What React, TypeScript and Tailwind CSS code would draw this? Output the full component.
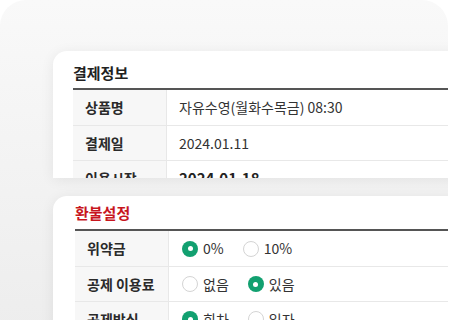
type Row = { label: string; value?: string; options?: { text: string; checked: boolean }[] };

const payRows: Row[] = [
  { label: "상품명", value: "자유수영(월화수목금) 08:30" },
  { label: "결제일", value: "2024.01.11" },
  { label: "이용시작", value: "2024.01.18" },
];

const refundRows: Row[] = [
  { label: "위약금", options: [{ text: "0%", checked: true }, { text: "10%", checked: false }] },
  { label: "공제 이용료", options: [{ text: "없음", checked: false }, { text: "있음", checked: true }] },
  { label: "공제방식", options: [{ text: "회차", checked: true }, { text: "일자", checked: false }] },
];

const Radio = ({ checked }: { checked: boolean }) =>
  checked ? (
    <span className="flex h-[16px] w-[16px] items-center justify-center rounded-full bg-[#12a070]">
      <span className="h-[5px] w-[5px] rounded-full bg-white" />
    </span>
  ) : (
    <span className="h-[16px] w-[16px] rounded-full border-[1.5px] border-[#d4d4d4] bg-white" />
  );

const Table = ({ rows }: { rows: Row[] }) => (
  <div className="border-t-2 border-[#555]">
    {rows.map((r, i) => (
      <div key={r.label} className={`flex h-[35px] ${i > 0 ? "border-t border-[#e8e8e8]" : "h-[34px]"}`}>
        <div className="flex w-[94px] shrink-0 items-center border-r border-[#e8e8e8] bg-[#f7f7f7] pl-[12px] text-[14px] font-semibold text-[#2a2a2a]">
          {r.label}
        </div>
        <div className="flex flex-1 items-center pl-[12px] text-[14px] text-[#333]">
          {r.value && (
            <span className={i === 2 && !r.options ? "text-[15px] font-semibold text-[#222]" : ""}>{r.value}</span>
          )}
          {r.options && (
            <div className="flex items-center gap-[19px] pl-[1px]">
              {r.options.map((o) => (
                <div key={o.text} className="flex items-center gap-[5px]">
                  <Radio checked={o.checked} />
                  <span>{o.text}</span>
                </div>
              ))}
            </div>
          )}
        </div>
      </div>
    ))}
  </div>
);

export default function App() {
  return (
    <div
      className="h-[320px] w-[450px] overflow-hidden bg-white"
      style={{ fontFamily: '"Noto Sans CJK KR", "Noto Sans", sans-serif' }}
    >
      <div className="mr-[2px] h-[360px] overflow-hidden rounded-t-[26px] bg-gradient-to-b from-[#f9f9f9] to-[#ececec] pl-[53px] pt-[51px]">
        <div className="h-[127px] w-[420px] overflow-hidden rounded-tl-[14px] bg-white pl-[20px] pt-[12px] shadow-[0_2px_14px_rgba(0,0,0,0.07)]">
          <div className="mb-[5px] text-[15px] font-semibold leading-[20px] text-[#222]">결제정보</div>
          <Table rows={payRows} />
        </div>
        <div className="mt-[18px] h-[200px] w-[420px] overflow-hidden rounded-tl-[14px] bg-white pl-[22px] pt-[7px] shadow-[0_2px_14px_rgba(0,0,0,0.07)]">
          <div className="mb-[6px] text-[15px] font-semibold leading-[20px] text-[#c8161e]">환불설정</div>
          <Table rows={refundRows} />
        </div>
      </div>
    </div>
  );
}
